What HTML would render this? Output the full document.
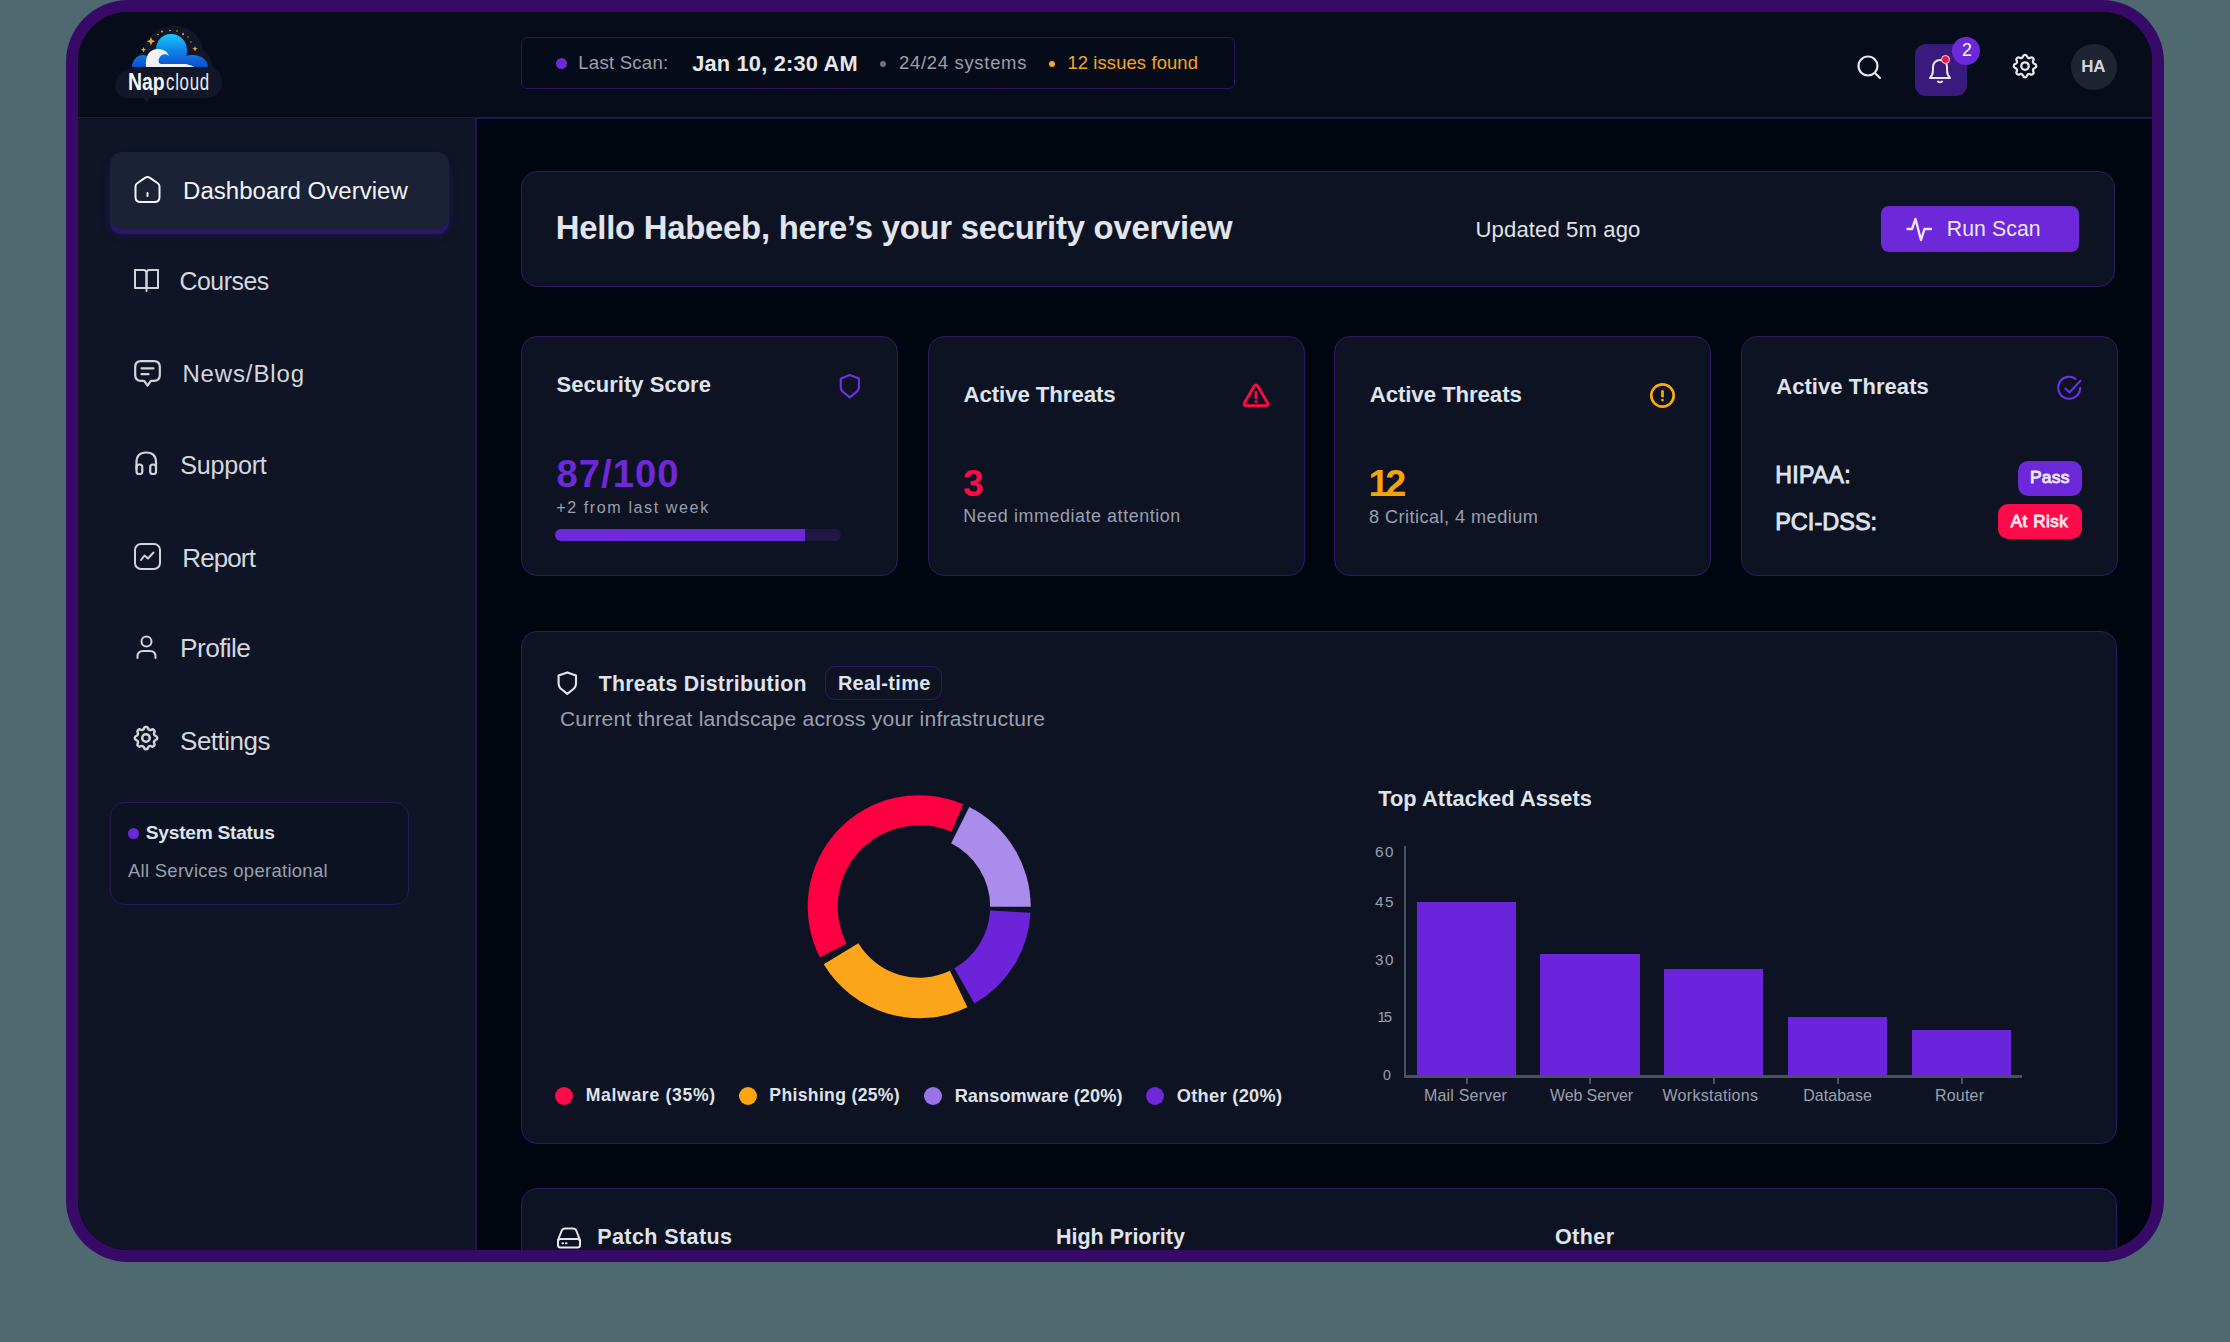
<!DOCTYPE html>
<html><head><meta charset="utf-8">
<style>
*{margin:0;padding:0;box-sizing:border-box}
html,body{width:2230px;height:1342px;overflow:hidden;background:#4f6970;font-family:"Liberation Sans",sans-serif}
#frame{position:absolute;left:66px;top:0px;width:2098px;height:1262px;border-radius:62px;background:#380a68}
#inner{position:absolute;left:12px;top:12px;width:2074px;height:1238px;border-radius:50px;overflow:hidden;background:#010510}
#pg{position:absolute;left:-78px;top:-12px;width:2230px;height:1342px}
.a{position:absolute;white-space:nowrap;line-height:1}
.card{position:absolute;background:#0e1324;border:1px solid #2a1b62;border-radius:16px}
svg{position:absolute;overflow:visible}
</style></head><body>
<div id="frame"><div id="inner"><div id="pg">
 <!-- header -->
 <div class="a" style="left:78px;top:12px;width:2074px;height:105px;background:#070c1b"></div>
 <div class="a" style="left:78px;top:116.5px;width:2074px;height:2px;background:#1e1650"></div>

 <!-- logo -->
 <svg style="left:0;top:0" width="2230" height="130" viewBox="0 0 2230 130">
  <path d="M128 98 C116 98 113 86 117 79 C119 72 126 69 132 69 C134 60 138 54 144 50 C145 39 153 31 162 28 C170 24 182 25 190 30 C197 34 202 42 203 50 C209 54 212 60 212 66 C219 70 223 77 222 85 C221 94 213 98 205 98 L150 98 L147 103 L143 98 Z" fill="#111729"/>
  <defs><linearGradient id="lg1" x1="0" y1="0" x2="0" y2="1"><stop offset="0" stop-color="#1ac8fb"/><stop offset="0.45" stop-color="#118ae8"/><stop offset="1" stop-color="#0b4fd0"/></linearGradient></defs>
  <path d="M132 67 C132 60 137 55 143 55 C146 55 148 56 150 57 L156 50 C156 40 163 34 171 34 C180 34 187 41 187 50 C187 52 187 54 186 56 C188 55 191 55 193 55 C201 55 208 60 208 67 Z" fill="url(#lg1)"/>
  <path d="M146 67 C145 55 150 49 158 49 C163 49 167 51 169 56 C166 53 160 54 159 59 C158 62 159 64 162 64 L183 64 C189 64 192 66 194 67 Z" fill="#f1f2f6"/>
  <g fill="#f5a623"><path d="M151 37 l1.2 3 3 1.2 -3 1.2 -1.2 3 -1.2 -3 -3 -1.2 3 -1.2z"/><path d="M143.5 47 l.8 2 2 .8 -2 .8 -.8 2 -.8 -2 -2 -.8 2 -.8z"/><path d="M195 46 l.8 2 2 .8 -2 .8 -.8 2 -.8 -2 -2 -.8 2 -.8z"/><circle cx="162" cy="31.5" r="1"/><circle cx="158" cy="34.5" r=".8"/><circle cx="170" cy="30.5" r=".8"/><circle cx="177" cy="31" r=".8"/><circle cx="183" cy="34" r="1"/><circle cx="188" cy="37" r=".7"/><circle cx="191" cy="42" r=".7"/></g>
 </svg>

 <div class="a" style="left:127.5px;top:70.6px;font-size:23.4px;color:#f4f5f8;font-weight:bold;transform:scaleX(.83);transform-origin:0 0">Nap</div>
 <div class="a" style="left:165.5px;top:70.6px;font-size:23.4px;color:#e9ebf0;letter-spacing:1px;transform:scaleX(.72);transform-origin:0 0">cloud</div>
 <!-- scan status -->
 <div class="a" style="left:521px;top:37px;width:714px;height:52px;border:1.5px solid #27195a;border-radius:6px;background:#060b19"></div>
 <div class="a" style="left:555.5px;top:57.5px;width:11px;height:11px;border-radius:50%;background:#6d28d9"></div>
 <div class="a" style="left:880px;top:60.5px;width:6px;height:6px;border-radius:50%;background:#6b7280"></div>
 <div class="a" style="left:1048.5px;top:60.5px;width:6px;height:6px;border-radius:50%;background:#f5a524"></div>

 <!-- header icons -->
 <svg style="left:1856px;top:54px" width="28" height="28" viewBox="0 0 28 28" fill="none" stroke="#e5e7eb" stroke-width="2.2" stroke-linecap="round"><circle cx="12" cy="12" r="9.5"/><path d="M19 19 L24 24"/></svg>
 <div class="a" style="left:1915px;top:44px;width:52px;height:52px;border-radius:11px;background:#3b1a7e"></div>
 <svg style="left:1927px;top:55px" width="28" height="30" viewBox="0 0 28 30" fill="none" stroke="#e5e7eb" stroke-width="2" stroke-linecap="round" stroke-linejoin="round"><path d="M3 23 H23 C21 21 20 19 20 15 V12 C20 8 17 5 13 5 C9 5 6 8 6 12 V15 C6 19 5 21 3 23 Z"/><path d="M11 26.5 C12 27.5 14 27.5 15 26.5"/></svg>
 <div class="a" style="left:1940.8px;top:54.9px;width:9.4px;height:9.4px;border-radius:50%;background:#ff0a45;border:1.6px solid #e5e7eb"></div>
 <div class="a" style="left:1952px;top:37px;width:28px;height:28px;border-radius:50%;background:#6d28d9"></div>
 <svg style="left:2010px;top:51px" width="30" height="30" viewBox="0 0 24 24" fill="none" stroke="#e5e7eb" stroke-width="1.8" stroke-linecap="round" stroke-linejoin="round"><path d="M10.325 4.317c.426-1.756 2.924-1.756 3.35 0a1.724 1.724 0 0 0 2.573 1.066c1.543-.94 3.31.826 2.37 2.37a1.724 1.724 0 0 0 1.065 2.572c1.756.426 1.756 2.924 0 3.35a1.724 1.724 0 0 0-1.066 2.573c.94 1.543-.826 3.31-2.37 2.37a1.724 1.724 0 0 0-2.572 1.065c-.426 1.756-2.924 1.756-3.35 0a1.724 1.724 0 0 0-2.573-1.066c-1.543.94-3.31-.826-2.37-2.37a1.724 1.724 0 0 0-1.065-2.572c-1.756-.426-1.756-2.924 0-3.35a1.724 1.724 0 0 0 1.066-2.573c-.94-1.543.826-3.31 2.37-2.37c1 .608 2.296.07 2.572-1.065z"/><circle cx="12" cy="12" r="3"/></svg>
 <div class="a" style="left:2071px;top:43.5px;width:46px;height:46px;border-radius:50%;background:#1f2433"></div>
 <!-- sidebar -->
 <div class="a" style="left:78px;top:118px;width:397px;height:1140px;background:#0f1426"></div>
 <div class="a" style="left:475px;top:118px;width:2px;height:1140px;background:#1e1650"></div>

 <div class="a" style="left:110px;top:152px;width:339px;height:77px;border-radius:12px;background:#1b2236;box-shadow:0 5px 0 #2a1668,0 6px 8px rgba(60,20,140,.45)"></div>
 <svg style="left:134px;top:176px" width="27" height="27" viewBox="0 0 27 27" stroke="#f3f4f6" stroke-width="2" fill="none" stroke-linecap="round" stroke-linejoin="round"><path d="M1.5 10.5 Q1.5 8.5 3.2 7.3 L11 1.9 Q13.5 .3 16 1.9 L23.8 7.3 Q25.5 8.5 25.5 10.5 V21 Q25.5 26 20.5 26 H6.5 Q1.5 26 1.5 21 Z"/><path d="M13.5 17 V20"/></svg>
 <svg style="left:134px;top:269px" width="25" height="23" viewBox="0 0 25 23" stroke="#d1d5db" stroke-width="2" fill="none" stroke-linecap="round" stroke-linejoin="round"><path d="M1 1 H9.5 Q12.5 1 12.5 4 V19 H1 Z"/><path d="M24 1 H15.5 Q12.5 1 12.5 4 V19 H24 Z"/><path d="M12.5 19 V22"/></svg>
 <svg style="left:134px;top:360px" width="27" height="28" viewBox="0 0 27 28" stroke="#d1d5db" stroke-width="2.2" fill="none" stroke-linecap="round" stroke-linejoin="round"><path d="M7 1.2 H20 Q25.8 1.2 25.8 7 V15 Q25.8 20.8 20 20.8 H16.8 L13.5 25.6 L10.2 20.8 H7 Q1.2 20.8 1.2 15 V7 Q1.2 1.2 7 1.2 Z"/><path d="M7.5 8.3 H19.5"/><path d="M7.5 14.2 H14.5"/></svg>
 <svg style="left:135px;top:451px" width="23" height="25" viewBox="0 0 23 25" stroke="#d1d5db" stroke-width="2.2" fill="none" stroke-linecap="round" stroke-linejoin="round" stroke-width="2.5"><path d="M1.5 18 V11.5 Q1.5 1.5 11.2 1.5 Q21 1.5 21 11.5 V18"/><rect x="1.5" y="13.5" width="5.8" height="9.5" rx="2.6"/><rect x="15.2" y="13.5" width="5.8" height="9.5" rx="2.6"/></svg>
 <svg style="left:134px;top:543px" width="27" height="27" viewBox="0 0 27 27" stroke="#d1d5db" stroke-width="2" fill="none" stroke-linecap="round" stroke-linejoin="round"><rect x="1" y="1" width="25" height="25" rx="6"/><path d="M7 17 L10.5 12.5 L14 15.5 L19.5 9.5"/></svg>
 <svg style="left:136px;top:635px" width="21" height="24" viewBox="0 0 21 24" stroke="#d1d5db" stroke-width="2" fill="none" stroke-linecap="round" stroke-linejoin="round" stroke-width="2.2"><circle cx="10.5" cy="6.5" r="5"/><path d="M1.5 23 V21.5 Q1.5 16 7 16 H14 Q19.5 16 19.5 21.5 V23"/></svg>
 <svg style="left:131px;top:723px" width="30" height="30" viewBox="0 0 24 24" stroke="#d1d5db" stroke-width="2" fill="none" stroke-linecap="round" stroke-linejoin="round" stroke-width="1.7"><path d="M10.325 4.317c.426-1.756 2.924-1.756 3.35 0a1.724 1.724 0 0 0 2.573 1.066c1.543-.94 3.31.826 2.37 2.37a1.724 1.724 0 0 0 1.065 2.572c1.756.426 1.756 2.924 0 3.35a1.724 1.724 0 0 0-1.066 2.573c.94 1.543-.826 3.31-2.37 2.37a1.724 1.724 0 0 0-2.572 1.065c-.426 1.756-2.924 1.756-3.35 0a1.724 1.724 0 0 0-2.573-1.066c-1.543.94-3.31-.826-2.37-2.37a1.724 1.724 0 0 0-1.065-2.572c-1.756-.426-1.756-2.924 0-3.35a1.724 1.724 0 0 0 1.066-2.573c-.94-1.543.826-3.31 2.37-2.37c1 .608 2.296.07 2.572-1.065z"/><circle cx="12" cy="12" r="3"/></svg>
 <!-- system status -->
 <div class="a" style="left:110px;top:802px;width:299px;height:103px;border:1.5px solid #251a58;border-radius:14px;background:#0d1222"></div>
 <div class="a" style="left:127.5px;top:827.5px;width:11px;height:11px;border-radius:50%;background:#6d28d9"></div>
 <div class="card" style="left:521px;top:171px;width:1594px;height:116px"></div>
 <div class="a" style="left:1881px;top:206px;width:198px;height:46px;border-radius:8px;background:#6d28d9"></div>
 <svg style="left:1906px;top:217px" width="27" height="25" viewBox="0 0 27 25" fill="none" stroke="#e9e6f5" stroke-width="2.4" stroke-linecap="round" stroke-linejoin="round"><path d="M1.5 12 H6 L9.5 2 L15 23 L18.5 12 H25"/></svg>
 <div class="card" style="left:521px;top:336px;width:377px;height:239.5px"></div>
 <div class="card" style="left:928px;top:336px;width:377px;height:239.5px"></div>
 <div class="card" style="left:1334px;top:336px;width:377px;height:239.5px"></div>
 <div class="card" style="left:1741px;top:336px;width:377px;height:239.5px"></div>
 <div class="a" style="left:555px;top:529px;width:286px;height:12px;border-radius:6px;background:#1f1744"></div>
 <div class="a" style="left:555px;top:529px;width:250px;height:12px;border-radius:6px 0 0 6px;background:#6d28d9"></div>
 <div class="a" style="left:2018px;top:460.5px;width:64px;height:35px;border-radius:10px;background:#6d28d9"></div>
 <div class="a" style="left:1998px;top:504px;width:84px;height:35px;border-radius:10px;background:#ff0a4a"></div>
 <svg style="left:838px;top:373px" width="24" height="26" viewBox="0 0 24 26" fill="none" stroke="#7030e6" stroke-width="2.1" stroke-linejoin="round"><path d="M11.8 2 L20.9 5.4 V15 Q20.5 17 19 18.5 L11.8 24.4 L4.6 18.5 Q3.1 17 2.8 15 V5.4 Z"/></svg>
 <svg style="left:1242px;top:383px" width="28" height="25" viewBox="0 0 28 25" fill="none" stroke="#ff0a45" stroke-width="2.8" stroke-linecap="round" stroke-linejoin="round"><path d="M12.2 3.2 Q14 0.8 15.8 3.2 L25.6 20 Q26.6 22.6 24 22.6 H4 Q1.4 22.6 2.4 20 Z"/><path d="M14 9.5 V14.8"/><path d="M14 18.6 V18.7"/></svg>
 <svg style="left:1649px;top:382px" width="27" height="27" viewBox="0 0 27 27" fill="none" stroke="#f8ab0a" stroke-width="2.7" stroke-linecap="round"><circle cx="13.5" cy="13.5" r="11.2"/><path d="M13.5 9.3 V14.2"/><path d="M13.5 18 V18.1"/></svg>
 <svg style="left:2056px;top:375px" width="27" height="27" viewBox="0 0 27 27" fill="none" stroke="#7030e6" stroke-width="2.1" stroke-linecap="round" stroke-linejoin="round"><path d="M24.2 12.9 A11 11 0 1 1 19.6 3.8"/><path d="M9.5 13.4 L13.5 17.4 L24.5 5.8"/></svg>
 <div class="card" style="left:521px;top:631px;width:1596px;height:513px;border-width:1.5px"></div>
 <svg style="left:556px;top:670px" width="23" height="27" viewBox="0 0 23 27" fill="none" stroke="#e2e5ec" stroke-width="2.1" stroke-linejoin="round"><path d="M11.3 2.4 L20 5.4 V13.8 Q19.8 16.5 18 18.5 L11.3 23.9 L4.6 18.5 Q2.8 16.5 2.6 13.8 V5.4 Z"/></svg>
 <div class="a" style="left:825px;top:666px;width:117px;height:34px;border:1.5px solid #2c1a68;border-radius:10px"></div>
 <svg style="left:0;top:0" width="2230" height="1342"><path d="M969.30 807.09 A111.5 111.5 0 0 1 1030.70 906.70 L990.20 906.70 A71 71 0 0 0 951.10 843.27 Z" fill="#a98ceb"/><path d="M1030.54 912.73 A111.5 111.5 0 0 1 974.44 1003.55 L954.38 968.37 A71 71 0 0 0 990.10 910.54 Z" fill="#6d23da"/><path d="M967.38 1007.25 A111.5 111.5 0 0 1 823.73 964.29 L858.41 943.37 A71 71 0 0 0 949.88 970.73 Z" fill="#fea61b"/><path d="M819.85 957.32 A111.5 111.5 0 0 1 963.12 804.22 L951.31 831.79 A81.5 81.5 0 0 0 846.58 943.70 Z" fill="#fe0042"/></svg>
 <div class="a" style="left:555px;top:1086.6px;width:18px;height:18px;border-radius:50%;background:#ff0a4a"></div>
 <div class="a" style="left:739px;top:1086.6px;width:18px;height:18px;border-radius:50%;background:#fda50f"></div>
 <div class="a" style="left:923.6px;top:1086.6px;width:18px;height:18px;border-radius:50%;background:#9a72ea"></div>
 <div class="a" style="left:1146px;top:1086.6px;width:18px;height:18px;border-radius:50%;background:#6d28d9"></div>
 <div class="a" style="left:1404px;top:846px;width:2px;height:231px;background:#4b5060"></div>
 <div class="a" style="left:1404px;top:1075px;width:618px;height:2.5px;background:#4b5060"></div>
 <div class="a" style="left:1417px;top:901.5px;width:99px;height:173.5px;background:#6b24dc"></div>
 <div class="a" style="left:1465.5px;top:1077px;width:2px;height:7px;background:#4b5060"></div>
 <div class="a" style="left:1540px;top:954px;width:99.5px;height:121px;background:#6b24dc"></div>
 <div class="a" style="left:1588.75px;top:1077px;width:2px;height:7px;background:#4b5060"></div>
 <div class="a" style="left:1664px;top:968.7px;width:99px;height:106.29999999999995px;background:#6b24dc"></div>
 <div class="a" style="left:1712.5px;top:1077px;width:2px;height:7px;background:#4b5060"></div>
 <div class="a" style="left:1788px;top:1017px;width:99px;height:58px;background:#6b24dc"></div>
 <div class="a" style="left:1836.5px;top:1077px;width:2px;height:7px;background:#4b5060"></div>
 <div class="a" style="left:1912px;top:1030px;width:99px;height:45px;background:#6b24dc"></div>
 <div class="a" style="left:1960.5px;top:1077px;width:2px;height:7px;background:#4b5060"></div>
 <div class="card" style="left:521px;top:1187.5px;width:1596px;height:200px;border-width:1.5px"></div>
 <svg style="left:556px;top:1227px" width="26" height="22" viewBox="0 0 26 22" fill="none" stroke="#e5e7eb" stroke-width="2" stroke-linecap="round" stroke-linejoin="round"><path d="M2 13 L6 3 Q7 1.5 9 1.5 H17 Q19 1.5 20 3 L24 13"/><rect x="2" y="12" width="22" height="8.5" rx="2.5"/><path d="M6.5 16.3 H7"/><path d="M10 16.3 H10.5"/></svg>
 <div class="a" style="left:578.24px;top:53.69px;font-size:18.60px;letter-spacing:0.233px;color:#9aa0ad;">Last Scan:</div>
 <div class="a" style="left:692.16px;top:52.50px;font-size:21.80px;letter-spacing:0.192px;color:#e6e8ee;font-weight:bold;">Jan 10, 2:30 AM</div>
 <div class="a" style="left:899.00px;top:54.13px;font-size:18.46px;letter-spacing:0.709px;color:#9aa0ad;">24/24 systems</div>
 <div class="a" style="left:1067.40px;top:54.13px;font-size:18.46px;letter-spacing:0.101px;color:#f5a524;">12 issues found</div>
 <div class="a" style="left:1962.00px;top:42.43px;font-size:17.73px;letter-spacing:0.000px;color:#ffffff;">2</div>
 <div class="a" style="left:2081.24px;top:59.17px;font-size:16.86px;letter-spacing:-0.243px;color:#d4d7de;font-weight:bold;">HA</div>
 <div class="a" style="left:183.04px;top:178.50px;font-size:23.98px;letter-spacing:0.057px;color:#f3f4f6;">Dashboard Overview</div>
 <div class="a" style="left:179.56px;top:270.20px;font-size:24.85px;letter-spacing:-0.477px;color:#d4d7de;">Courses</div>
 <div class="a" style="left:182.44px;top:362.02px;font-size:23.98px;letter-spacing:0.875px;color:#d4d7de;">News/Blog</div>
 <div class="a" style="left:180.36px;top:452.71px;font-size:25.15px;letter-spacing:-0.276px;color:#d4d7de;">Support</div>
 <div class="a" style="left:182.28px;top:544.62px;font-size:26.02px;letter-spacing:-0.898px;color:#d4d7de;">Report</div>
 <div class="a" style="left:180.08px;top:635.37px;font-size:26.31px;letter-spacing:-0.617px;color:#d4d7de;">Profile</div>
 <div class="a" style="left:180.08px;top:727.78px;font-size:26.02px;letter-spacing:-0.522px;color:#d4d7de;">Settings</div>
 <div class="a" style="left:145.84px;top:823.44px;font-size:19.19px;letter-spacing:-0.266px;color:#dfe3eb;font-weight:bold;">System Status</div>
 <div class="a" style="left:127.96px;top:861.69px;font-size:18.46px;letter-spacing:0.302px;color:#9aa0ad;">All Services operational</div>
 <div class="a" style="left:555.80px;top:212.15px;font-size:32.85px;letter-spacing:-0.238px;color:#e2e5ec;font-weight:bold;">Hello Habeeb, here’s your security overview</div>
 <div class="a" style="left:1475.56px;top:218.58px;font-size:22.09px;letter-spacing:0.119px;color:#dfe2e8;">Updated 5m ago</div>
 <div class="a" style="left:1946.76px;top:218.20px;font-size:21.22px;letter-spacing:0.097px;color:#ebe7f7;">Run Scan</div>
 <div class="a" style="left:556.52px;top:374.06px;font-size:21.95px;letter-spacing:0.057px;color:#dfe3eb;font-weight:bold;">Security Score</div>
 <div class="a" style="left:963.48px;top:384.10px;font-size:22.24px;letter-spacing:-0.082px;color:#dfe3eb;font-weight:bold;">Active Threats</div>
 <div class="a" style="left:1369.68px;top:384.10px;font-size:22.24px;letter-spacing:-0.082px;color:#dfe3eb;font-weight:bold;">Active Threats</div>
 <div class="a" style="left:1776.20px;top:375.74px;font-size:21.95px;letter-spacing:0.106px;color:#dfe3eb;font-weight:bold;">Active Threats</div>
 <div class="a" style="left:556.40px;top:455.28px;font-size:38.23px;letter-spacing:1.045px;color:#6d28d9;font-weight:bold;">87/100</div>
 <div class="a" style="left:556.20px;top:499.34px;font-size:16.13px;letter-spacing:1.584px;color:#9aa0ad;">+2 from last week</div>
 <div class="a" style="left:962.88px;top:465.46px;font-size:37.21px;letter-spacing:0.000px;color:#ff0a45;font-weight:bold;">3</div>
 <div class="a" style="left:963.36px;top:508.43px;font-size:17.88px;letter-spacing:0.583px;color:#9aa0ad;">Need immediate attention</div>
 <div class="a" style="left:1368.48px;top:465.25px;font-size:37.79px;letter-spacing:-4.348px;color:#f5a50b;font-weight:bold;">12</div>
 <div class="a" style="left:1368.88px;top:507.90px;font-size:18.17px;letter-spacing:0.451px;color:#9aa0ad;">8 Critical, 4 medium</div>
 <div class="a" style="left:1775.20px;top:463.96px;font-size:23.06px;letter-spacing:0.335px;color:#dfe3eb;-webkit-text-stroke:0.9px currentColor;">HIPAA:</div>
 <div class="a" style="left:1775.20px;top:510.89px;font-size:23.47px;letter-spacing:0.029px;color:#dfe3eb;-webkit-text-stroke:0.9px currentColor;">PCI-DSS:</div>
 <div class="a" style="left:2030.04px;top:468.75px;font-size:17.40px;letter-spacing:0.216px;color:#ece8f8;-webkit-text-stroke:0.9px currentColor;">Pass</div>
 <div class="a" style="left:2010.72px;top:513.22px;font-size:16.98px;letter-spacing:0.560px;color:#fde8ee;-webkit-text-stroke:0.9px currentColor;">At Risk</div>
 <div class="a" style="left:598.64px;top:672.56px;font-size:21.22px;letter-spacing:0.328px;color:#dfe3eb;font-weight:bold;">Threats Distribution</div>
 <div class="a" style="left:837.88px;top:674.26px;font-size:19.91px;letter-spacing:0.359px;color:#dfe3eb;font-weight:bold;">Real-time</div>
 <div class="a" style="left:559.88px;top:708.20px;font-size:21.08px;letter-spacing:0.191px;color:#9aa0ad;">Current threat landscape across your infrastructure</div>
 <div class="a" style="left:585.68px;top:1086.71px;font-size:17.59px;letter-spacing:0.689px;color:#dfe2e8;font-weight:bold;">Malware (35%)</div>
 <div class="a" style="left:769.36px;top:1086.71px;font-size:17.59px;letter-spacing:0.334px;color:#dfe2e8;font-weight:bold;">Phishing (25%)</div>
 <div class="a" style="left:954.68px;top:1086.58px;font-size:18.17px;letter-spacing:0.090px;color:#dfe2e8;font-weight:bold;">Ransomware (20%)</div>
 <div class="a" style="left:1176.68px;top:1086.58px;font-size:18.17px;letter-spacing:0.351px;color:#dfe2e8;font-weight:bold;">Other (20%)</div>
 <div class="a" style="left:1378.20px;top:787.82px;font-size:21.80px;letter-spacing:0.074px;color:#dfe3eb;font-weight:bold;">Top Attacked Assets</div>
 <div class="a" style="left:1375.00px;top:844.20px;font-size:15.26px;letter-spacing:1.460px;color:#9aa0ad;">60</div>
 <div class="a" style="left:1375.00px;top:893.56px;font-size:15.26px;letter-spacing:1.460px;color:#9aa0ad;">45</div>
 <div class="a" style="left:1375.00px;top:951.88px;font-size:15.26px;letter-spacing:1.460px;color:#9aa0ad;">30</div>
 <div class="a" style="left:1377.52px;top:1009.82px;font-size:14.96px;letter-spacing:-2.002px;color:#9aa0ad;">15</div>
 <div class="a" style="left:1383.04px;top:1068.47px;font-size:14.19px;letter-spacing:0.000px;color:#9aa0ad;">0</div>
 <div class="a" style="left:1423.92px;top:1088.27px;font-size:15.99px;letter-spacing:0.210px;color:#9aa0ad;">Mail Server</div>
 <div class="a" style="left:1549.96px;top:1088.27px;font-size:15.99px;letter-spacing:-0.100px;color:#9aa0ad;">Web Server</div>
 <div class="a" style="left:1662.48px;top:1088.27px;font-size:15.99px;letter-spacing:0.312px;color:#9aa0ad;">Workstations</div>
 <div class="a" style="left:1803.20px;top:1088.27px;font-size:15.99px;letter-spacing:0.053px;color:#9aa0ad;">Database</div>
 <div class="a" style="left:1934.92px;top:1088.27px;font-size:15.99px;letter-spacing:0.223px;color:#9aa0ad;">Router</div>
 <div class="a" style="left:597.24px;top:1226.55px;font-size:21.51px;letter-spacing:0.410px;color:#dfe3eb;font-weight:bold;">Patch Status</div>
 <div class="a" style="left:1055.92px;top:1226.55px;font-size:21.51px;letter-spacing:0.004px;color:#dfe3eb;font-weight:bold;">High Priority</div>
 <div class="a" style="left:1554.88px;top:1226.55px;font-size:21.51px;letter-spacing:0.448px;color:#dfe3eb;font-weight:bold;">Other</div>
</div></div></div>
</body></html>
